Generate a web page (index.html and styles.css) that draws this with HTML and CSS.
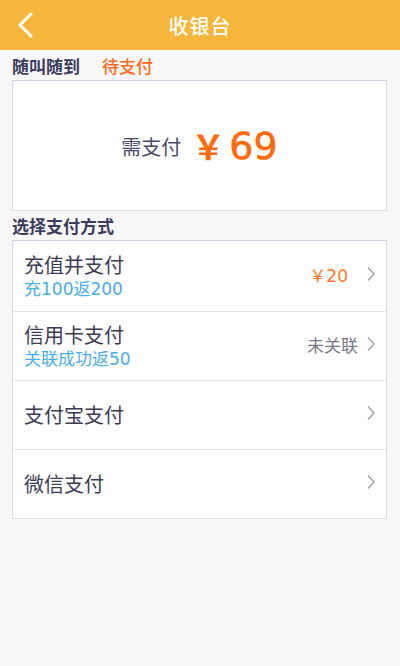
FILE: index.html
```html
<!DOCTYPE html>
<html lang="zh">
<head>
<meta charset="utf-8">
<link rel="stylesheet" href="styles.css">
</head>
<body>
<header class="topbar">
  <svg class="back" width="20" height="28" viewBox="0 0 20 28"><path d="M15 3 L4 14 L15 25" fill="none" stroke="#fff" stroke-width="3" stroke-linecap="round" stroke-linejoin="round"/></svg>
  <div class="title">收银台</div>
</header>
<div class="shop"><span class="shop-name">随叫随到</span><span class="status">待支付</span></div>
<section class="amount-card">
  <span class="need">需支付</span><span class="price"><span class="yen">￥</span>69</span>
</section>
<div class="section-label">选择支付方式</div>
<ul class="pay-list">
  <li class="pay-row">
    <div class="pay-text"><div class="pay-name">充值并支付</div><div class="pay-sub">充100返200</div></div>
    <span class="pay-extra orange">￥20</span>
    <svg class="chev" width="10" height="16" viewBox="0 0 10 16"><path d="M2 1.5 L8 8 L2 14.5" fill="none" stroke="#a4a4b4" stroke-width="1.5"/></svg>
  </li>
  <li class="pay-row">
    <div class="pay-text"><div class="pay-name">信用卡支付</div><div class="pay-sub">关联成功返50</div></div>
    <span class="pay-extra grey">未关联</span>
    <svg class="chev" width="10" height="16" viewBox="0 0 10 16"><path d="M2 1.5 L8 8 L2 14.5" fill="none" stroke="#a4a4b4" stroke-width="1.5"/></svg>
  </li>
  <li class="pay-row">
    <div class="pay-text"><div class="pay-name">支付宝支付</div></div>
    <svg class="chev" width="10" height="16" viewBox="0 0 10 16"><path d="M2 1.5 L8 8 L2 14.5" fill="none" stroke="#a4a4b4" stroke-width="1.5"/></svg>
  </li>
  <li class="pay-row">
    <div class="pay-text"><div class="pay-name">微信支付</div></div>
    <svg class="chev" width="10" height="16" viewBox="0 0 10 16"><path d="M2 1.5 L8 8 L2 14.5" fill="none" stroke="#a4a4b4" stroke-width="1.5"/></svg>
  </li>
</ul>
</body>
</html>
```
FILE: styles.css
```css
* { box-sizing: border-box; }
html, body { margin: 0; padding: 0; }
body {
  width: 400px;
  height: 666px;
  background: #f7f7f8;
  font-family: "DejaVu Sans", "Noto Sans CJK SC", sans-serif;
  color: #3a3a55;
}
.topbar {
  height: 50px;
  background: #f6b53b;
  display: flex;
  align-items: center;
  justify-content: center;
  position: relative;
}
.back { position: absolute; left: 16px; top: 11px; }
.title { color: #fff; font-size: 20px; font-weight: 500; letter-spacing: 1px; font-family: "Noto Sans CJK SC", sans-serif; }
.shop {
  height: 30px;
  display: flex;
  align-items: center;
  padding: 0 12px;
  font-size: 17px;
  font-family: "Noto Sans CJK SC", sans-serif;
}
.shop-name { color: #3c3c5e; font-weight: 700; }
.status { color: #ff6a1c; margin-left: 22px; font-weight: 500; }
.amount-card {
  margin: 0 13px 0 12px;
  height: 131px;
  background: #fff;
  border: 1px solid #dcdce4;
  border-top-color: #cfcfe2;
  display: flex;
  align-items: center;
  justify-content: center;
}
.need { font-size: 20px; color: #4a4a6a; margin-right: 10px; margin-top: 2px; font-family: "Noto Sans CJK SC", sans-serif; }
.price { color: #ff6a0a; font-family: "DejaVu Sans", sans-serif; font-size: 38px; display: flex; align-items: center; -webkit-text-stroke: 0.6px #ff6a0a; }
.yen { font-family: "Noto Sans CJK SC", sans-serif; font-size: 34px; font-weight: 700; margin-right: 4px; -webkit-text-stroke: 0; }
.section-label {
  height: 29px;
  padding: 0 12px;
  display: flex;
  align-items: center;
  font-size: 17px;
  font-weight: 700;
  color: #3c3c5e;
  font-family: "Noto Sans CJK SC", sans-serif;
}
.pay-list {
  list-style: none;
  margin: 0 13px 0 12px;
  padding: 0;
  background: #fff;
  border: 1px solid #dcdce4;
  border-top-color: #cfcfe2;
}
.pay-row {
  height: 69px;
  display: flex;
  align-items: center;
  padding: 0 10px 0 11px;
  border-top: 1px solid #e4e4ea;
}
.pay-row:first-child { border-top: none; height: 70px; }
.pay-text { flex: 1; }
.pay-name { font-size: 20px; color: #3c3c55; line-height: 26px; font-family: "Noto Sans CJK SC", sans-serif; }
.pay-sub { font-size: 17px; color: #4aaee8; line-height: 22px; }
.pay-extra { font-size: 17px; margin-top: -4px; }
.orange { color: #ff7a28; margin-right: 18px; }
.grey { color: #787888; font-family: "Noto Sans CJK SC", sans-serif; margin-right: 8px; }
.chev { margin-top: -4px; }
```
